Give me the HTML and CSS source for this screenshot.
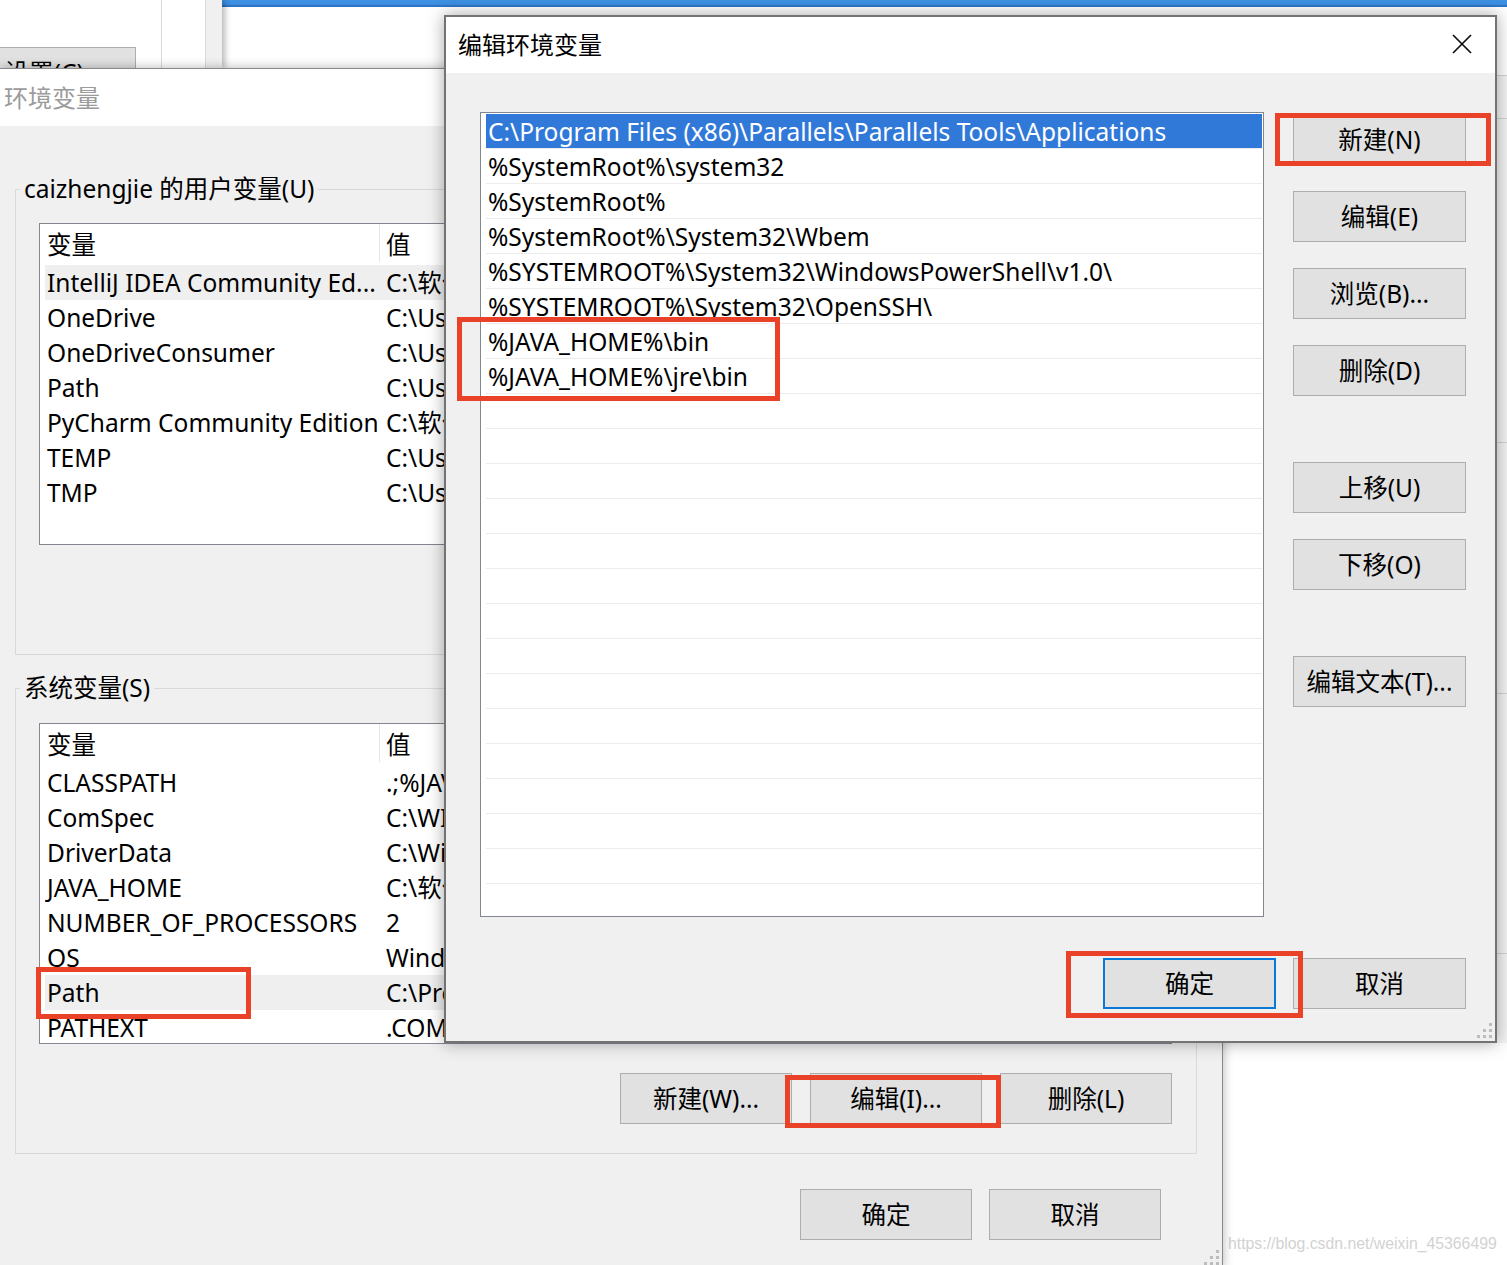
FILE: index.html
```html
<!DOCTYPE html>
<html lang="zh-CN">
<head>
<meta charset="utf-8">
<title>编辑环境变量</title>
<link rel="stylesheet" href="styles.css">
</head>
<body>
<div class="desk">

  <div class="win-browser">
    <div class="browser-bar"></div>
    <div class="wm">https://blog.csdn.net/weixin_45366499</div>
  </div>

  <div class="win-panel">
    <div class="pr r1"></div>
    <div class="pr r2"></div>
    <div class="pr r3"></div>
    <div class="pr r4"></div>
  </div>

  <div class="win-sys">
    <div class="sys-main">
      <button class="btn btn-set">设置(C)...</button>
    </div>
    <div class="sys-side"></div>
  </div>

  <section class="win-env">
    <header class="env-title">环境变量</header>
    <div class="env-body">
      <fieldset class="group g-user">
        <legend>caizhengjie 的用户变量(U)</legend>
        <div class="vlist vlist-user">
          <div class="vrow vhead"><span>变量</span><span>值</span></div>
          <div class="vrow sel"><span>IntelliJ IDEA Community Ed...</span><span>C:\软件</span></div>
          <div class="vrow"><span>OneDrive</span><span>C:\Users</span></div>
          <div class="vrow"><span>OneDriveConsumer</span><span>C:\Users</span></div>
          <div class="vrow"><span>Path</span><span>C:\Users</span></div>
          <div class="vrow"><span>PyCharm Community Edition</span><span>C:\软件</span></div>
          <div class="vrow"><span>TEMP</span><span>C:\Users</span></div>
          <div class="vrow"><span>TMP</span><span>C:\Users</span></div>
        </div>
      </fieldset>

      <fieldset class="group g-sys">
        <legend>系统变量(S)</legend>
        <div class="vlist vlist-sys">
          <div class="vrow vhead"><span>变量</span><span>值</span></div>
          <div class="vrow"><span>CLASSPATH</span><span>.;%JAVA</span></div>
          <div class="vrow"><span>ComSpec</span><span>C:\WIN</span></div>
          <div class="vrow"><span>DriverData</span><span>C:\Win</span></div>
          <div class="vrow"><span>JAVA_HOME</span><span>C:\软件</span></div>
          <div class="vrow"><span>NUMBER_OF_PROCESSORS</span><span>2</span></div>
          <div class="vrow"><span>OS</span><span>Windows</span></div>
          <div class="vrow sel"><span>Path</span><span>C:\Pro</span></div>
          <div class="vrow"><span>PATHEXT</span><span>.COM;</span></div>
        </div>
        <div class="btnrow grp-btns">
          <button class="btn">新建(W)...</button>
          <button class="btn">编辑(I)...</button>
          <button class="btn">删除(L)</button>
        </div>
      </fieldset>

      <div class="btnrow env-foot">
        <button class="btn">确定</button>
        <button class="btn">取消</button>
      </div>
    </div>
    <svg class="grip" width="15" height="15" viewBox="0 0 15 15" aria-hidden="true">
      <rect x="12" y="0" width="3" height="3"/>
      <rect x="6" y="6" width="3" height="3"/><rect x="12" y="6" width="3" height="3"/>
      <rect x="0" y="12" width="3" height="3"/><rect x="6" y="12" width="3" height="3"/><rect x="12" y="12" width="3" height="3"/>
    </svg>
  </section>

  <section class="win-edit">
    <header class="edit-title">
      <span>编辑环境变量</span>
      <svg class="close" width="20" height="20" viewBox="0 0 20 20" aria-hidden="true">
        <path d="M1 1 L19 19 M19 1 L1 19"/>
      </svg>
    </header>
    <div class="edit-body">
      <div class="plist">
        <div class="prow sel">C:\Program Files (x86)\Parallels\Parallels Tools\Applications</div>
        <div class="prow">%SystemRoot%\system32</div>
        <div class="prow">%SystemRoot%</div>
        <div class="prow">%SystemRoot%\System32\Wbem</div>
        <div class="prow">%SYSTEMROOT%\System32\WindowsPowerShell\v1.0\</div>
        <div class="prow">%SYSTEMROOT%\System32\OpenSSH\</div>
        <div class="prow">%JAVA_HOME%\bin</div>
        <div class="prow">%JAVA_HOME%\jre\bin</div>
        <div class="prow"></div><div class="prow"></div><div class="prow"></div>
        <div class="prow"></div><div class="prow"></div><div class="prow"></div>
        <div class="prow"></div><div class="prow"></div><div class="prow"></div>
        <div class="prow"></div><div class="prow"></div><div class="prow"></div>
        <div class="prow"></div><div class="prow"></div>
      </div>
      <div class="side-btns">
        <button class="btn">新建(N)</button>
        <button class="btn">编辑(E)</button>
        <button class="btn">浏览(B)...</button>
        <button class="btn">删除(D)</button>
        <button class="btn spaced">上移(U)</button>
        <button class="btn">下移(O)</button>
        <button class="btn spaced">编辑文本(T)...</button>
      </div>
      <div class="btnrow edit-foot">
        <button class="btn btn-default">确定</button>
        <button class="btn">取消</button>
      </div>
    </div>
    <svg class="grip" width="15" height="15" viewBox="0 0 15 15" aria-hidden="true">
      <rect x="12" y="0" width="3" height="3"/>
      <rect x="6" y="6" width="3" height="3"/><rect x="12" y="6" width="3" height="3"/>
      <rect x="0" y="12" width="3" height="3"/><rect x="6" y="12" width="3" height="3"/><rect x="12" y="12" width="3" height="3"/>
    </svg>
  </section>

  <div class="mark m1"></div>
  <div class="mark m2"></div>
  <div class="mark m3"></div>
  <div class="mark m4"></div>
  <div class="mark m5"></div>
</div>
</body>
</html>
```

FILE: styles.css
```css
* { box-sizing: border-box; }

html, body {
  margin: 0;
  padding: 0;
}

body {
  width: 1507px;
  height: 1265px;
  overflow: hidden;
  background: #ffffff;
  font-family: "Noto Sans", "Noto Sans CJK SC", sans-serif;
  font-size: 24.5px;
  color: #000000;
}

.desk {
  position: relative;
  width: 1507px;
  height: 1265px;
  overflow: hidden;
}

/* ---------- common button ---------- */
.btn {
  display: block;
  width: 173px;
  height: 51px;
  padding: 0;
  margin: 0;
  background: #e1e1e1;
  border: 1px solid #adadad;
  font-family: "Noto Sans", "Noto Sans CJK SC", sans-serif;
  font-size: 24.5px;
  line-height: 47px;
  color: #000;
  text-align: center;
  white-space: nowrap;
}

.btnrow {
  display: flex;
  justify-content: flex-end;
}

/* ---------- background windows ---------- */
.win-browser {
  position: absolute;
  left: 222px;
  top: 0;
  right: 0;
  bottom: 0;
  background: #ffffff;
}

.browser-bar {
  height: 7px;
  background: linear-gradient(#3e92e3 0, #3a8ce0 5px, #2f74c4 5px, #2f74c4 7px);
}

.wm {
  position: absolute;
  left: 1006px;
  top: 1235px;
  font-family: "Liberation Sans", Arial, sans-serif;
  font-size: 15.8px;
  color: #d2d2d2;
  white-space: nowrap;
}

.win-panel {
  position: absolute;
  left: 1300px;
  top: 75px;
  right: 0;
  height: 968px;
  background: #f4f4f4;
  border-top: 1px solid #d4d4d4;
  display: flex;
  flex-direction: column;
}

.pr { border-bottom: 1px solid #d4d4d4; }
.r1 { height: 43px; }
.r2 { height: 324px; }
.r3 { height: 251px; }
.r4 { height: 260px; }

.win-sys {
  position: absolute;
  left: 0;
  top: 0;
  width: 222px;
  height: 68px;
  overflow: hidden;
  display: flex;
  box-shadow: 3px 0 6px rgba(0, 0, 0, 0.28);
}

.sys-main {
  width: 205px;
  padding-top: 47px;
  background:
    linear-gradient(to right, transparent 161px, #dadada 161px, #dadada 162px, transparent 162px),
    #ffffff;
}

.btn-set {
  margin-left: -28px;
  width: 164px;
}

.sys-side {
  flex: 1;
  background: #f0f0f0;
  border-left: 1px solid #dadada;
}

/* ---------- 环境变量 window ---------- */
.win-env {
  position: absolute;
  left: 0;
  top: 68px;
  width: 1223px;
  height: 1200px;
  background: #f0f0f0;
  border-top: 1px solid #8a8a8a;
  border-right: 1px solid #8a8a8a;
  box-shadow: 0 0 10px rgba(0, 0, 0, 0.3);
}

.env-title {
  height: 57px;
  background: #ffffff;
  padding-left: 4px;
  font-family: "Noto Sans CJK SC", sans-serif;
  font-size: 24px;
  line-height: 55px;
  color: #9b9b9b;
}

.env-body {
  padding: 0 25px 0 15px;
}

.group {
  margin: 0;
  padding: 0 24px 109px 0;
  border: 1px solid #d9d9d9;
  min-width: 0;
}

.group legend {
  margin-left: 4px;
  padding: 0 4px;
  font-size: 24.5px;
  line-height: 32px;
}

.g-user { margin-top: 47px; }
.g-sys  { margin-top: 17px; padding-bottom: 29px; }

.vlist {
  margin-left: 23px;
  background: #ffffff;
  border: 1px solid #828790;
  padding: 0 0 0 5px;
  overflow: hidden;
}

.vlist-user { margin-top: 18px; height: 322px; }
.vlist-sys  { margin-top: 19px; height: 321px; }

.vrow {
  display: grid;
  grid-template-columns: 334px 1fr;
  height: 35px;
  line-height: 35px;
  white-space: nowrap;
}

.vrow span { overflow: hidden; }
.vrow span:first-child { padding-left: 2px; }
.vrow span:last-child { padding-left: 7px; }

.vrow.vhead {
  height: 41px;
  line-height: 41px;
}

.vrow.vhead span:last-child {
  border-left: 1px solid #e5e5e5;
  padding-left: 6px;
  height: 38px;
}

.vrow.sel { background: #efefef; }

.grp-btns {
  margin-top: 29px;
  gap: 18px;
}

.grp-btns .btn { width: 172px; }

.env-foot {
  margin-top: 35px;
  margin-right: 36px;
  gap: 17px;
}

.env-foot .btn { width: 172px; }

.grip {
  position: absolute;
  right: 3px;
  bottom: 3px;
  fill: #bdbdbd;
}

/* ---------- 编辑环境变量 dialog ---------- */
.win-edit {
  position: absolute;
  left: 444px;
  top: 15px;
  width: 1053px;
  height: 1028px;
  background: #f0f0f0;
  border: 2px solid #737373;
  box-shadow: 0 0 16px rgba(0, 0, 0, 0.35);
}

.edit-title {
  height: 56px;
  background: #ffffff;
  display: flex;
  align-items: center;
  justify-content: space-between;
  padding: 0 23px 3px 12px;
  font-family: "Noto Sans CJK SC", sans-serif;
  font-size: 24px;
}

.close path {
  stroke: #111;
  stroke-width: 1.7;
  fill: none;
}

.edit-body {
  display: grid;
  grid-template-columns: 784px 173px;
  column-gap: 29px;
  padding: 39px 29px 0 34px;
}

.plist {
  height: 805px;
  background: #ffffff;
  border: 1px solid #828790;
  padding: 1px 1px 0 5px;
  overflow: hidden;
}

.prow {
  height: 35px;
  line-height: 35px;
  padding-left: 2px;
  border-bottom: 1px solid #ececec;
  white-space: nowrap;
  overflow: hidden;
}

.prow.sel {
  background: #3179d8;
  color: #ffffff;
}

.side-btns {
  display: flex;
  flex-direction: column;
  gap: 26px;
  padding-top: 2px;
}

.side-btns .spaced { margin-top: 40px; }

.edit-foot {
  grid-column: 1 / -1;
  margin-top: 41px;
  gap: 17px;
}

.btn-default {
  border: 2px solid #0a78d7;
  line-height: 45px;
}

/* ---------- red annotation boxes ---------- */
.mark {
  position: absolute;
  border: 5px solid #ea4129;
  z-index: 10;
}

.m1 { left: 1275px; top: 113px; width: 216px; height: 53px; }
.m2 { left: 457px;  top: 317px; width: 323px; height: 84px; }
.m3 { left: 1066px; top: 951px; width: 237px; height: 67px; }
.m4 { left: 36px;   top: 967px; width: 215px; height: 52px; }
.m5 { left: 785px;  top: 1075px; width: 216px; height: 53px; }
```
